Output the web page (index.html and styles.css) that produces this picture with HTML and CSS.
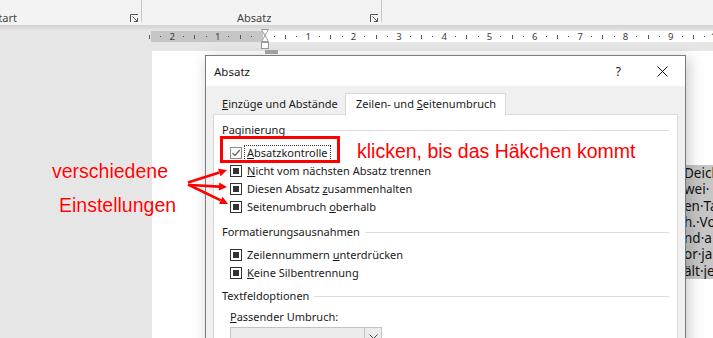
FILE: index.html
```html
<!DOCTYPE html>
<html lang="de">
<head>
    <meta charset="UTF-8">
    <title>Absatz</title>
    <link rel="stylesheet" href="styles.css">
</head>
<body>
    <header class="ribbon">
        <div class="group group-font">
            <span class="group-label label-font">Schriftart</span>
            <svg class="launcher" width="9" height="9" viewBox="0 0 9 9"><path d="M0.5 8V0.5H8" fill="none" stroke="#555"/><path d="M2.5 2.5L7.5 7.5M4 7.5H7.5V4" fill="none" stroke="#555"/></svg>
        </div>
        <div class="group group-para">
            <span class="group-label label-para">Absatz</span>
            <svg class="launcher" width="9" height="9" viewBox="0 0 9 9"><path d="M0.5 8V0.5H8" fill="none" stroke="#555"/><path d="M2.5 2.5L7.5 7.5M4 7.5H7.5V4" fill="none" stroke="#555"/></svg>
        </div>
    </header>
    <div class="ribbon-shadow"></div>

    <div class="ruler-row">
        <div class="ruler">
            <i class="l"></i><i class="d"></i><i>2</i><i class="d"></i><i class="l"></i><i class="d"></i><i>1</i><i class="d"></i><i class="l"></i><i class="d"></i><i></i>
            <i class="d"></i><i class="l"></i><i class="d"></i><i>1</i>
            <i class="d"></i><i class="l"></i><i class="d"></i><i>2</i>
            <i class="d"></i><i class="l"></i><i class="d"></i><i>3</i>
            <i class="d"></i><i class="l"></i><i class="d"></i><i>4</i>
            <i class="d"></i><i class="l"></i><i class="d"></i><i>5</i>
            <i class="d"></i><i class="l"></i><i class="d"></i><i>6</i>
            <i class="d"></i><i class="l"></i><i class="d"></i><i>7</i>
            <i class="d"></i><i class="l"></i><i class="d"></i><i>8</i>
            <i class="d"></i><i class="l"></i><i class="d"></i><i>9</i>
            <i class="d"></i><i class="l"></i><i class="d"></i><i>10</i>
        </div>
    </div>
    <svg class="indent-marker" width="20" height="26" viewBox="0 0 20 26">
        <path d="M1.5 0.5H8.5L5 6.5L8.5 12.5H1.5L5 6.5Z" fill="#fff" stroke="#9a9a9a"/>
        <rect x="1.5" y="13.5" width="7" height="6" fill="#fff" stroke="#9a9a9a"/>
        <rect x="5" y="21" width="13" height="4" fill="#a8a8a8"/>
    </svg>

    <div class="workspace">
        <div class="page-gap"></div>
        <div class="page">
            <div class="doc">
                <div>Deich</div>
                <div>wei·</div>
                <div>en·Ta</div>
                <div>h.·Vo</div>
                <div>nd·a</div>
                <div>or·ja</div>
                <div>ält·je</div>
            </div>
        </div>
    </div>

    <div class="dialog">
        <div class="titlebar">
            <span class="title">Absatz</span>
            <span class="help">?</span>
            <svg class="close" width="11" height="11" viewBox="0 0 11 11"><path d="M0.5 0.5L10.5 10.5M10.5 0.5L0.5 10.5" stroke="#111" stroke-width="1"/></svg>
        </div>
        <div class="tabs">
            <div class="tab"><u>E</u>inzüge und Abstände</div>
            <div class="tab active">Zeilen- und <u>S</u>eitenumbruch</div>
        </div>
        <div class="panel">
            <div class="group-box">
                <div class="group-head"><span>Paginierung</span><span class="rule"></span></div>
                <div class="checks">
                    <div class="check">
                        <span class="box checked"><svg width="10" height="10" viewBox="0 0 10 10"><path d="M1.5 5L4 7.5L8.8 2" fill="none" stroke="#6a6a6a" stroke-width="1.3"/></svg></span>
                        <span class="focus"><u>A</u>bsatzkontrolle</span>
                    </div>
                    <div class="check"><span class="box"><span class="fill"></span></span><span class="text"><u>N</u>icht vom nächsten Absatz trennen</span></div>
                    <div class="check"><span class="box"><span class="fill"></span></span><span class="text">Diesen Absatz <u>z</u>usammenhalten</span></div>
                    <div class="check"><span class="box"><span class="fill"></span></span><span class="text">Seitenumbruch <u>o</u>berhalb</span></div>
                </div>
            </div>
            <div class="group-box">
                <div class="group-head"><span>Formatierungsausnahmen</span><span class="rule"></span></div>
                <div class="checks">
                    <div class="check"><span class="box"><span class="fill"></span></span><span class="text">Zeilennummern <u>u</u>nterdrücken</span></div>
                    <div class="check"><span class="box"><span class="fill"></span></span><span class="text"><u>K</u>eine Silbentrennung</span></div>
                </div>
            </div>
            <div class="group-box group-last">
                <div class="group-head"><span>Textfeldoptionen</span><span class="rule"></span></div>
                <div class="field-label"><u>P</u>assender Umbruch:</div>
                <div class="select">
                    <span class="select-value"></span>
                    <span class="select-arrow"><svg width="9" height="5" viewBox="0 0 9 5"><path d="M0.5 0.5L4.5 4.5L8.5 0.5" fill="none" stroke="#444"/></svg></span>
                </div>
            </div>
        </div>
    </div>

    <!-- annotations drawn over the screenshot -->
    <div class="mark-box"></div>
    <div class="note note-click">klicken, bis das Häkchen kommt</div>
    <div class="note note-various">verschiedene</div>
    <div class="note note-settings">Einstellungen</div>
    <svg class="arrows" width="60" height="55" viewBox="0 0 60 55">
        <g stroke="#f00" stroke-width="2.6" fill="none">
            <path d="M8 22.5L39.4 12.5"/>
            <path d="M10 25L39 26.6"/>
            <path d="M8 24.5L40.8 40.4"/>
        </g>
        <g fill="#f00">
            <polygon points="47,10 40.6,16.3 38.1,8.7"/>
            <polygon points="47,27 38.8,30.6 39.2,22.6"/>
            <polygon points="48,44 39.1,44 42.6,36.8"/>
        </g>
    </svg>
</body>
</html>
```
FILE: styles.css
```css
* {
    box-sizing: border-box;
}

body {
    margin: 0;
    width: 713px;
    height: 338px;
    overflow: hidden;
    position: relative;
    background: #e6e6e6;
    font-family: "Noto Sans", sans-serif;
    font-size: 11px;
    color: #1a1a1a;
}

/* ribbon */
.ribbon {
    height: 25px;
    display: flex;
    background: #f3f3f3;
    overflow: hidden;
}

.group {
    height: 25px;
    display: flex;
    align-items: flex-start;
    padding-top: 10px;
    color: #444;
    background: linear-gradient(#c6c6c6, #c6c6c6) right top / 1px 22px no-repeat;
}

.group-font {
    width: 142px;
}

.group-para {
    width: 240px;
}

.group-label {
    line-height: 16px;
    white-space: nowrap;
}

.label-font {
    margin-left: -31px;
}

.label-para {
    margin-left: 95px;
}

.launcher {
    margin-left: auto;
    margin-right: 3px;
    margin-top: 4px;
}

.ribbon-shadow {
    height: 6px;
    background: linear-gradient(#d2d2d2, #e6e6e6);
}

/* ruler */
.ruler-row {
    height: 11px;
    padding-left: 151px;
    overflow: hidden;
}

.ruler {
    height: 11px;
    display: flex;
    background: linear-gradient(to right, #c6c6c6 112px, #fff 112px);
}

.ruler i {
    flex: 0 0 11.333px;
    height: 11px;
    display: flex;
    justify-content: center;
    align-items: center;
    font-style: normal;
    font-size: 9.5px;
    line-height: 11px;
    color: #3a3a3a;
}

.ruler i:first-child {
    margin-left: -7px;
}

.ruler .d::before {
    content: "";
    width: 1px;
    height: 1px;
    background: #555;
}

.ruler .l::before {
    content: "";
    width: 1px;
    height: 4px;
    background: #555;
}

.indent-marker {
    position: absolute;
    left: 260px;
    top: 29px;
}

/* document */
.workspace {
    display: flex;
    height: 296px;
    padding-top: 9px;
}

.page-gap {
    flex: 0 0 152px;
}

.page {
    flex: 1;
    min-width: 0;
    background: #fff;
}

.doc {
    margin-left: 534px;
    margin-top: 114px;
    background: #c6c6c6;
    font-size: 13.5px;
    line-height: 16.3px;
    color: #111;
    text-indent: -2px;
    overflow: hidden;
    white-space: nowrap;
}

/* dialog */
.dialog {
    position: absolute;
    left: 205px;
    top: 55px;
    width: 481px;
    height: 300px;
    background: #f0f0f0;
    border: 1px solid #7a7a7a;
    box-shadow: 3px 3px 14px rgba(0, 0, 0, 0.22);
}

.titlebar {
    height: 30px;
    background: #fff;
    display: flex;
    align-items: center;
    padding-left: 8px;
}

.title {
    font-size: 11.5px;
}

.help {
    margin-left: auto;
    margin-right: 36px;
    font-size: 12px;
}

.close {
    margin-right: 17px;
}

.tabs {
    display: flex;
    padding: 7px 0 0 7px;
    height: 29px;
}

.tab {
    height: 20px;
    margin-top: 2px;
    width: 132px;
    padding: 1px 0 0 9px;
    line-height: 16px;
    white-space: nowrap;
}

.tab.active {
    width: 161px;
    height: 23px;
    margin-top: 0;
    padding: 2px 0 0 10px;
    background: #fff;
    border: 1px solid #d9d9d9;
    border-bottom: none;
    position: relative;
    z-index: 1;
}

.panel {
    margin: -1px 7px 0 7px;
    height: 250px;
    background: #fff;
    border: 1px solid #d9d9d9;
    padding: 7px 8px 0 8px;
}

.group-box + .group-box {
    margin-top: 8px;
}

.group-box.group-last {
    margin-top: 6px;
}

.group-head {
    display: flex;
    align-items: center;
    height: 16px;
    line-height: 16px;
    color: #1a1a1a;
}

.rule {
    flex: 1;
    height: 1px;
    margin-left: 5px;
    background: #dcdcdc;
}

.checks {
    margin-top: 6px;
    padding-left: 8px;
}

.check {
    display: flex;
    align-items: center;
    height: 18px;
}

.box {
    width: 12px;
    height: 12px;
    border: 1px solid #333;
    background: #fff;
    display: flex;
    justify-content: center;
    align-items: center;
}

.box.checked {
    border-color: #8a8a8a;
}

.fill {
    width: 6px;
    height: 6px;
    background: #333;
}

.text {
    margin-left: 5px;
    line-height: 16px;
}

.focus {
    margin-left: 3px;
    padding: 0 2px;
    line-height: 14px;
    outline: 1px dotted #333;
}

.field-label {
    margin-top: 5px;
    padding-left: 8px;
    line-height: 16px;
}

.select {
    margin: 2px 0 0 8px;
    width: 152px;
    height: 22px;
    display: flex;
    background: #ececec;
    border: 1px solid #c4c4c4;
}

.select-value {
    flex: 1;
}

.select-arrow {
    width: 17px;
    border-left: 1px solid #c4c4c4;
    display: flex;
    justify-content: center;
    padding-top: 6px;
}

/* annotations */
.mark-box {
    position: absolute;
    left: 220px;
    top: 136px;
    width: 120px;
    height: 27px;
    border: 3px solid #f00;
}

.note {
    position: absolute;
    font-family: "Liberation Sans", Arial, sans-serif;
    font-size: 19.5px;
    line-height: 20px;
    color: #f00;
    white-space: nowrap;
    text-shadow: 0 0 1px #fff, 0 0 1px #fff;
}

.note-click {
    left: 357px;
    top: 141px;
}

.note-various {
    left: 52px;
    top: 161px;
}

.note-settings {
    left: 59px;
    top: 195px;
}

.arrows {
    position: absolute;
    left: 180px;
    top: 160px;
}
```
